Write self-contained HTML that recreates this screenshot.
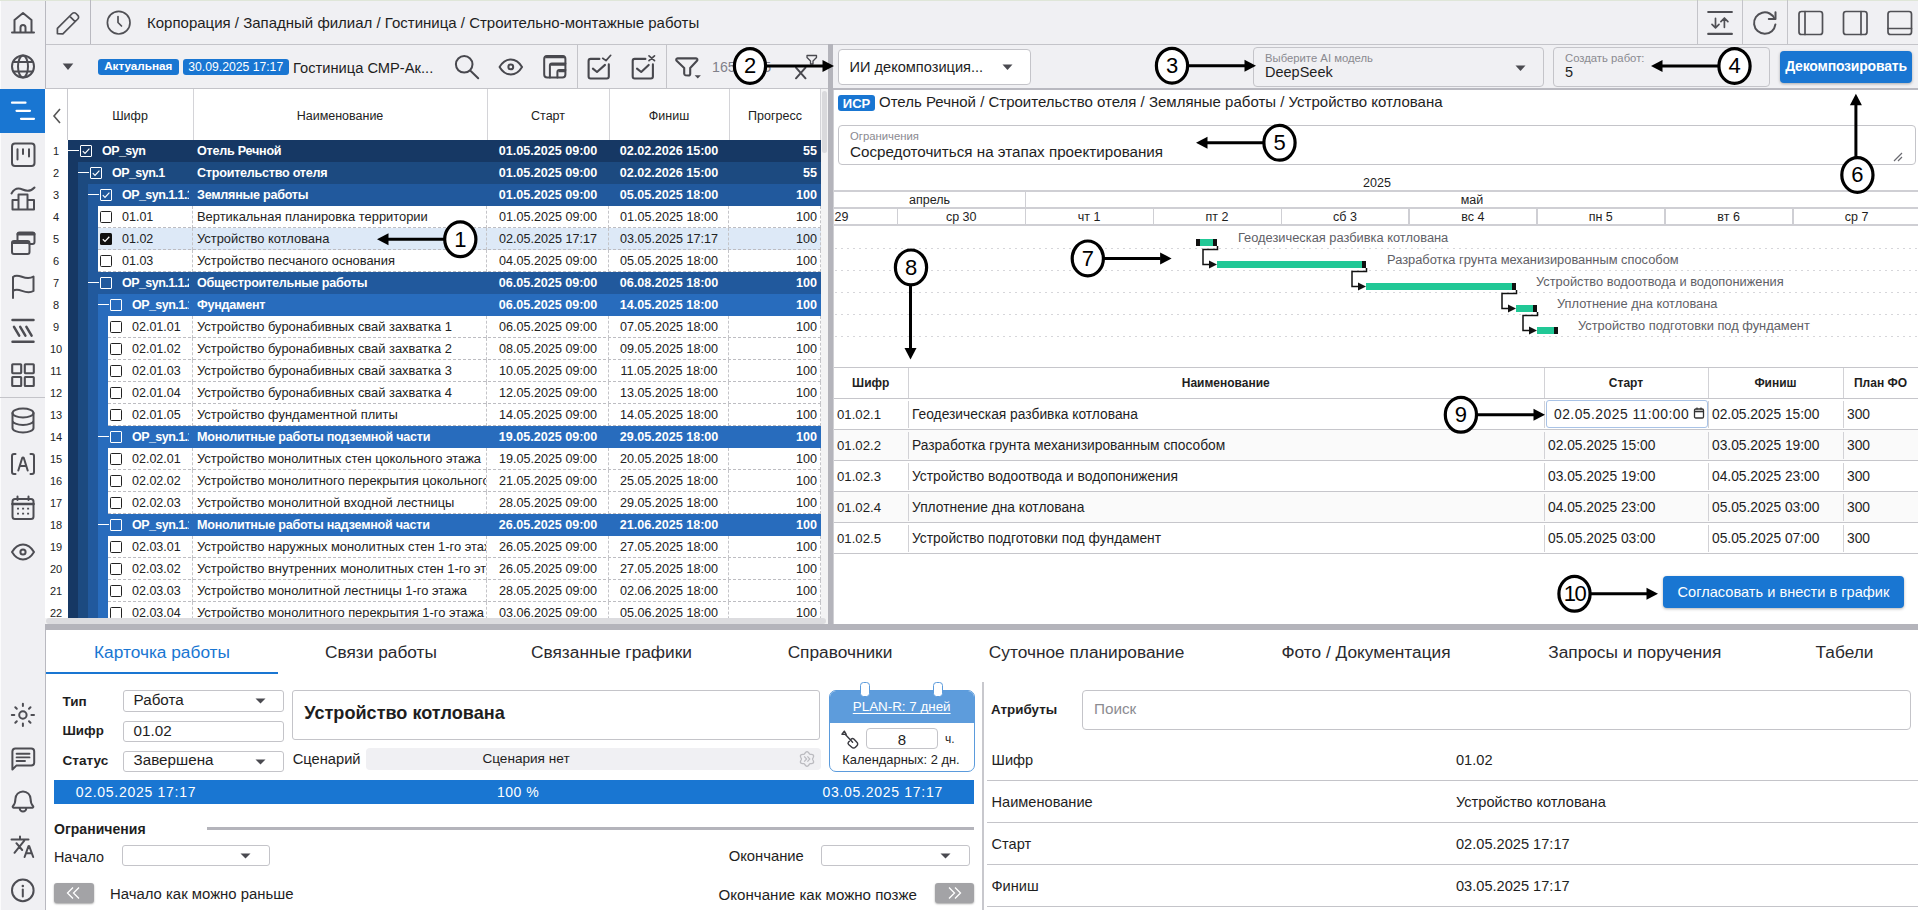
<!DOCTYPE html>
<html><head><meta charset="utf-8">
<style>
*{box-sizing:border-box;margin:0;padding:0}
html,body{width:1918px;height:910px;overflow:hidden;background:#fff}
body{position:relative;font-family:"Liberation Sans",sans-serif;color:#1e1e1e;font-size:13px}
.a{position:absolute}
.t{position:absolute;white-space:nowrap;line-height:1}
svg{position:absolute;overflow:visible}
.ic{fill:none;stroke:#4a4a50;stroke-width:1.8;stroke-linecap:round;stroke-linejoin:round}
</style></head><body>
<!-- sidebar -->
<div class="a" style="left:0;top:0;width:46px;height:910px;background:#f0f0f3;border-right:1px solid #b9b9c0"></div>
<div class="a" style="left:0;top:1px;width:1px;height:909px;background:#fbfbfc"></div>
<div class="a" style="left:0;top:89px;width:45px;height:44px;background:#1976d2"></div>
<div class="a" style="left:0;top:397px;width:45px;height:1px;background:#c4c4c9"></div>
<!-- top bar -->
<div class="a" style="left:46px;top:0;width:1872px;height:45px;background:#f0f0f3;border-bottom:1px solid #c4c4c9"></div>
<div class="a" style="left:0;top:0;width:1918px;height:1px;background:#dfe6d8"></div>
<div class="a" style="left:90px;top:0;width:1px;height:44px;background:#b9b9c0"></div>
<div class="a" style="left:1697px;top:0;width:1px;height:44px;background:#c4c4c9"></div>
<div class="a" style="left:1742px;top:0;width:1px;height:44px;background:#c4c4c9"></div>
<div class="a" style="left:1787px;top:0;width:1px;height:44px;background:#c4c4c9"></div>
<div class="t" style="left:147px;top:15px;font-size:15px;color:#1e1e1e">Корпорация / Западный филиал / Гостиница / Строительно-монтажные работы</div>
<!-- left toolbar -->
<div class="a" style="left:46px;top:45px;width:782px;height:44px;background:#f0f0f3;border-bottom:1px solid #c4c4c9"></div>
<div class="a" style="left:577px;top:44px;width:1px;height:44px;background:#c4c4c9"></div>
<div class="a" style="left:666px;top:44px;width:1px;height:44px;background:#c4c4c9"></div>
<!-- right toolbar -->
<div class="a" style="left:833px;top:45px;width:1085px;height:45px;background:#f0f0f3;border-bottom:2px solid #b9b9c0"></div>
<!-- splitters -->
<div class="a" style="left:828px;top:44px;width:5px;height:586px;background:#b4b4bb"></div>
<div class="a" style="left:45px;top:624px;width:1873px;height:6px;background:#b4b4bb"></div>
<!-- right panel left border -->
<div class="a" style="left:833px;top:90px;width:1px;height:534px;background:#d0d0d4"></div>
<!-- bottom panel left border -->

<div class="a" style="left:45px;top:89px;width:783px;height:535px;background:#fff"></div>
<div class="a" style="left:67px;top:89px;width:1px;height:51px;background:#c9c9ce"></div>
<div class="a" style="left:193px;top:89px;width:1px;height:51px;background:#d4d4d8"></div>
<div class="a" style="left:487px;top:89px;width:1px;height:51px;background:#d4d4d8"></div>
<div class="a" style="left:609px;top:89px;width:1px;height:51px;background:#d4d4d8"></div>
<div class="a" style="left:729px;top:89px;width:1px;height:51px;background:#d4d4d8"></div>
<div class="a" style="left:820px;top:89px;width:1px;height:51px;background:#d4d4d8"></div>
<div class="t" style="left:67px;width:126px;top:109.5px;text-align:center;font-size:12.5px;color:#222">Шифр</div>
<div class="t" style="left:193px;width:294px;top:109.5px;text-align:center;font-size:12.5px;color:#222">Наименование</div>
<div class="t" style="left:487px;width:122px;top:109.5px;text-align:center;font-size:12.5px;color:#222">Старт</div>
<div class="t" style="left:609px;width:120px;top:109.5px;text-align:center;font-size:12.5px;color:#222">Финиш</div>
<div class="t" style="left:729px;width:92px;top:109.5px;text-align:center;font-size:12.5px;color:#222">Прогресс</div>
<svg style="left:51px;top:107px" width="12" height="18"><path d="M9 2 L3 9 L9 16" fill="none" stroke="#555" stroke-width="1.6"/></svg>
<div class="a" style="left:45px;top:140px;width:775.5px;height:478px;overflow:hidden">
<div class="t" style="left:0;width:22px;top:6px;text-align:center;font-size:11px;color:#222">1</div>
<div class="a" style="left:23px;top:0px;width:753px;height:22px;background:#163864"></div>
<div class="a" style="left:23px;top:9.8px;width:10.5px;height:1.6px;background:#fff"></div>
<div class="a" style="left:35px;top:5px;width:12px;height:12px;border:1.3px solid #fff;border-radius:1px"></div>
<svg style="left:35px;top:5px" width="12" height="12"><path d="M2.8 6.2 L5 8.4 L9.4 3.6" fill="none" stroke="#fff" stroke-width="1.2"/></svg>
<div class="a" style="left:57px;top:0px;width:87px;height:22px;overflow:hidden"><div class="t" style="left:0;top:5px;font-size:12.5px;font-weight:bold;color:#fff;letter-spacing:-0.55px">OP_syn</div></div>
<div class="t" style="left:152px;top:5px;font-size:12.6px;font-weight:bold;color:#fff;letter-spacing:-0.25px">Отель Речной</div>
<div class="t" style="left:442px;width:122px;top:5px;text-align:center;font-size:12.6px;font-weight:bold;color:#fff">01.05.2025 09:00</div>
<div class="t" style="left:564px;width:120px;top:5px;text-align:center;font-size:12.6px;font-weight:bold;color:#fff">02.02.2026 15:00</div>
<div class="t" style="left:684px;width:88px;top:5px;text-align:right;font-size:12.6px;font-weight:bold;color:#fff">55</div>
<div class="t" style="left:0;width:22px;top:28px;text-align:center;font-size:11px;color:#222">2</div>
<div class="a" style="left:23px;top:22px;width:10px;height:22px;background:#163864"></div>
<div class="a" style="left:33px;top:22px;width:743px;height:22px;background:#1c4a80"></div>
<div class="a" style="left:33px;top:31.8px;width:10.5px;height:1.6px;background:#fff"></div>
<div class="a" style="left:45px;top:27px;width:12px;height:12px;border:1.3px solid #fff;border-radius:1px"></div>
<svg style="left:45px;top:27px" width="12" height="12"><path d="M2.8 6.2 L5 8.4 L9.4 3.6" fill="none" stroke="#fff" stroke-width="1.2"/></svg>
<div class="a" style="left:67px;top:22px;width:77px;height:22px;overflow:hidden"><div class="t" style="left:0;top:5px;font-size:12.5px;font-weight:bold;color:#fff;letter-spacing:-0.55px">OP_syn.1</div></div>
<div class="t" style="left:152px;top:27px;font-size:12.6px;font-weight:bold;color:#fff;letter-spacing:-0.25px">Строительство отеля</div>
<div class="t" style="left:442px;width:122px;top:27px;text-align:center;font-size:12.6px;font-weight:bold;color:#fff">01.05.2025 09:00</div>
<div class="t" style="left:564px;width:120px;top:27px;text-align:center;font-size:12.6px;font-weight:bold;color:#fff">02.02.2026 15:00</div>
<div class="t" style="left:684px;width:88px;top:27px;text-align:right;font-size:12.6px;font-weight:bold;color:#fff">55</div>
<div class="t" style="left:0;width:22px;top:50px;text-align:center;font-size:11px;color:#222">3</div>
<div class="a" style="left:23px;top:44px;width:10px;height:22px;background:#163864"></div>
<div class="a" style="left:33px;top:44px;width:10px;height:22px;background:#1c4a80"></div>
<div class="a" style="left:43px;top:44px;width:733px;height:22px;background:#21599d"></div>
<div class="a" style="left:43px;top:53.8px;width:10.5px;height:1.6px;background:#fff"></div>
<div class="a" style="left:55px;top:49px;width:12px;height:12px;border:1.3px solid #fff;border-radius:1px"></div>
<svg style="left:55px;top:49px" width="12" height="12"><path d="M2.8 6.2 L5 8.4 L9.4 3.6" fill="none" stroke="#fff" stroke-width="1.2"/></svg>
<div class="a" style="left:77px;top:44px;width:67px;height:22px;overflow:hidden"><div class="t" style="left:0;top:5px;font-size:12.5px;font-weight:bold;color:#fff;letter-spacing:-0.55px">OP_syn.1.1.1</div></div>
<div class="t" style="left:152px;top:49px;font-size:12.6px;font-weight:bold;color:#fff;letter-spacing:-0.25px">Земляные работы</div>
<div class="t" style="left:442px;width:122px;top:49px;text-align:center;font-size:12.6px;font-weight:bold;color:#fff">01.05.2025 09:00</div>
<div class="t" style="left:564px;width:120px;top:49px;text-align:center;font-size:12.6px;font-weight:bold;color:#fff">05.05.2025 18:00</div>
<div class="t" style="left:684px;width:88px;top:49px;text-align:right;font-size:12.6px;font-weight:bold;color:#fff">100</div>
<div class="t" style="left:0;width:22px;top:72px;text-align:center;font-size:11px;color:#222">4</div>
<div class="a" style="left:23px;top:66px;width:10px;height:22px;background:#163864"></div>
<div class="a" style="left:33px;top:66px;width:10px;height:22px;background:#1c4a80"></div>
<div class="a" style="left:43px;top:66px;width:10px;height:22px;background:#21599d"></div>
<div class="a" style="left:53px;top:66px;width:723px;height:22px;background:#fff;border-bottom:1px dashed #bdbdc2"></div>
<div class="a" style="left:147px;top:66px;width:0;height:22px;border-left:1px dashed #c4c4c8"></div>
<div class="a" style="left:441px;top:66px;width:0;height:22px;border-left:1px dashed #c4c4c8"></div>
<div class="a" style="left:563px;top:66px;width:0;height:22px;border-left:1px dashed #c4c4c8"></div>
<div class="a" style="left:683px;top:66px;width:0;height:22px;border-left:1px dashed #c4c4c8"></div>
<div class="a" style="left:775px;top:66px;width:0;height:22px;border-left:1px dashed #c4c4c8"></div>
<div class="a" style="left:55px;top:71px;width:12px;height:12px;border:1.3px solid #222;border-radius:1.5px;background:#fff"></div>
<div class="a" style="left:77px;top:66px;width:70px;height:22px;overflow:hidden"><div class="t" style="left:0;top:5px;font-size:12.5px;color:#222">01.01</div></div>
<div class="a" style="left:148px;top:66px;width:293px;height:22px;overflow:hidden"><div class="t" style="left:4px;top:5px;font-size:12.9px;color:#222">Вертикальная планировка территории</div></div>
<div class="t" style="left:442px;width:122px;top:71px;text-align:center;font-size:12.6px;color:#222">01.05.2025 09:00</div>
<div class="t" style="left:564px;width:120px;top:71px;text-align:center;font-size:12.6px;color:#222">01.05.2025 18:00</div>
<div class="t" style="left:684px;width:88px;top:71px;text-align:right;font-size:12.6px;color:#222">100</div>
<div class="t" style="left:0;width:22px;top:94px;text-align:center;font-size:11px;color:#222">5</div>
<div class="a" style="left:23px;top:88px;width:10px;height:22px;background:#163864"></div>
<div class="a" style="left:33px;top:88px;width:10px;height:22px;background:#1c4a80"></div>
<div class="a" style="left:43px;top:88px;width:10px;height:22px;background:#21599d"></div>
<div class="a" style="left:53px;top:88px;width:723px;height:22px;background:#dde9f7;border-bottom:1px dashed #bdbdc2"></div>
<div class="a" style="left:147px;top:88px;width:0;height:22px;border-left:1px dashed #c4c4c8"></div>
<div class="a" style="left:441px;top:88px;width:0;height:22px;border-left:1px dashed #c4c4c8"></div>
<div class="a" style="left:563px;top:88px;width:0;height:22px;border-left:1px dashed #c4c4c8"></div>
<div class="a" style="left:683px;top:88px;width:0;height:22px;border-left:1px dashed #c4c4c8"></div>
<div class="a" style="left:775px;top:88px;width:0;height:22px;border-left:1px dashed #c4c4c8"></div>
<div class="a" style="left:55px;top:93px;width:12px;height:12px;background:#111;border-radius:1.5px"></div>
<svg style="left:55px;top:93px" width="12" height="12"><path d="M2.8 6.3 L5 8.4 L9.3 3.8" fill="none" stroke="#fff" stroke-width="1.25"/></svg>
<div class="a" style="left:77px;top:88px;width:70px;height:22px;overflow:hidden"><div class="t" style="left:0;top:5px;font-size:12.5px;color:#222">01.02</div></div>
<div class="a" style="left:148px;top:88px;width:293px;height:22px;overflow:hidden"><div class="t" style="left:4px;top:5px;font-size:12.9px;color:#222">Устройство котлована</div></div>
<div class="t" style="left:442px;width:122px;top:93px;text-align:center;font-size:12.6px;color:#222">02.05.2025 17:17</div>
<div class="t" style="left:564px;width:120px;top:93px;text-align:center;font-size:12.6px;color:#222">03.05.2025 17:17</div>
<div class="t" style="left:684px;width:88px;top:93px;text-align:right;font-size:12.6px;color:#222">100</div>
<div class="t" style="left:0;width:22px;top:116px;text-align:center;font-size:11px;color:#222">6</div>
<div class="a" style="left:23px;top:110px;width:10px;height:22px;background:#163864"></div>
<div class="a" style="left:33px;top:110px;width:10px;height:22px;background:#1c4a80"></div>
<div class="a" style="left:43px;top:110px;width:10px;height:22px;background:#21599d"></div>
<div class="a" style="left:53px;top:110px;width:723px;height:22px;background:#fff;border-bottom:1px dashed #bdbdc2"></div>
<div class="a" style="left:147px;top:110px;width:0;height:22px;border-left:1px dashed #c4c4c8"></div>
<div class="a" style="left:441px;top:110px;width:0;height:22px;border-left:1px dashed #c4c4c8"></div>
<div class="a" style="left:563px;top:110px;width:0;height:22px;border-left:1px dashed #c4c4c8"></div>
<div class="a" style="left:683px;top:110px;width:0;height:22px;border-left:1px dashed #c4c4c8"></div>
<div class="a" style="left:775px;top:110px;width:0;height:22px;border-left:1px dashed #c4c4c8"></div>
<div class="a" style="left:55px;top:115px;width:12px;height:12px;border:1.3px solid #222;border-radius:1.5px;background:#fff"></div>
<div class="a" style="left:77px;top:110px;width:70px;height:22px;overflow:hidden"><div class="t" style="left:0;top:5px;font-size:12.5px;color:#222">01.03</div></div>
<div class="a" style="left:148px;top:110px;width:293px;height:22px;overflow:hidden"><div class="t" style="left:4px;top:5px;font-size:12.9px;color:#222">Устройство песчаного основания</div></div>
<div class="t" style="left:442px;width:122px;top:115px;text-align:center;font-size:12.6px;color:#222">04.05.2025 09:00</div>
<div class="t" style="left:564px;width:120px;top:115px;text-align:center;font-size:12.6px;color:#222">05.05.2025 18:00</div>
<div class="t" style="left:684px;width:88px;top:115px;text-align:right;font-size:12.6px;color:#222">100</div>
<div class="t" style="left:0;width:22px;top:138px;text-align:center;font-size:11px;color:#222">7</div>
<div class="a" style="left:23px;top:132px;width:10px;height:22px;background:#163864"></div>
<div class="a" style="left:33px;top:132px;width:10px;height:22px;background:#1c4a80"></div>
<div class="a" style="left:43px;top:132px;width:733px;height:22px;background:#21599d"></div>
<div class="a" style="left:43px;top:141.8px;width:10.5px;height:1.6px;background:#fff"></div>
<div class="a" style="left:55px;top:137px;width:12px;height:12px;border:1.3px solid #fff;border-radius:1px"></div>
<div class="a" style="left:77px;top:132px;width:67px;height:22px;overflow:hidden"><div class="t" style="left:0;top:5px;font-size:12.5px;font-weight:bold;color:#fff;letter-spacing:-0.55px">OP_syn.1.1.2</div></div>
<div class="t" style="left:152px;top:137px;font-size:12.6px;font-weight:bold;color:#fff;letter-spacing:-0.25px">Общестроительные работы</div>
<div class="t" style="left:442px;width:122px;top:137px;text-align:center;font-size:12.6px;font-weight:bold;color:#fff">06.05.2025 09:00</div>
<div class="t" style="left:564px;width:120px;top:137px;text-align:center;font-size:12.6px;font-weight:bold;color:#fff">06.08.2025 18:00</div>
<div class="t" style="left:684px;width:88px;top:137px;text-align:right;font-size:12.6px;font-weight:bold;color:#fff">100</div>
<div class="t" style="left:0;width:22px;top:160px;text-align:center;font-size:11px;color:#222">8</div>
<div class="a" style="left:23px;top:154px;width:10px;height:22px;background:#163864"></div>
<div class="a" style="left:33px;top:154px;width:10px;height:22px;background:#1c4a80"></div>
<div class="a" style="left:43px;top:154px;width:10px;height:22px;background:#21599d"></div>
<div class="a" style="left:53px;top:154px;width:723px;height:22px;background:#286cbd"></div>
<div class="a" style="left:53px;top:163.8px;width:10.5px;height:1.6px;background:#fff"></div>
<div class="a" style="left:65px;top:159px;width:12px;height:12px;border:1.3px solid #fff;border-radius:1px"></div>
<div class="a" style="left:87px;top:154px;width:57px;height:22px;overflow:hidden"><div class="t" style="left:0;top:5px;font-size:12.5px;font-weight:bold;color:#fff;letter-spacing:-0.55px">OP_syn.1.1.2.1</div></div>
<div class="t" style="left:152px;top:159px;font-size:12.6px;font-weight:bold;color:#fff;letter-spacing:-0.25px">Фундамент</div>
<div class="t" style="left:442px;width:122px;top:159px;text-align:center;font-size:12.6px;font-weight:bold;color:#fff">06.05.2025 09:00</div>
<div class="t" style="left:564px;width:120px;top:159px;text-align:center;font-size:12.6px;font-weight:bold;color:#fff">14.05.2025 18:00</div>
<div class="t" style="left:684px;width:88px;top:159px;text-align:right;font-size:12.6px;font-weight:bold;color:#fff">100</div>
<div class="t" style="left:0;width:22px;top:182px;text-align:center;font-size:11px;color:#222">9</div>
<div class="a" style="left:23px;top:176px;width:10px;height:22px;background:#163864"></div>
<div class="a" style="left:33px;top:176px;width:10px;height:22px;background:#1c4a80"></div>
<div class="a" style="left:43px;top:176px;width:10px;height:22px;background:#21599d"></div>
<div class="a" style="left:53px;top:176px;width:10px;height:22px;background:#286cbd"></div>
<div class="a" style="left:63px;top:176px;width:713px;height:22px;background:#fff;border-bottom:1px dashed #bdbdc2"></div>
<div class="a" style="left:147px;top:176px;width:0;height:22px;border-left:1px dashed #c4c4c8"></div>
<div class="a" style="left:441px;top:176px;width:0;height:22px;border-left:1px dashed #c4c4c8"></div>
<div class="a" style="left:563px;top:176px;width:0;height:22px;border-left:1px dashed #c4c4c8"></div>
<div class="a" style="left:683px;top:176px;width:0;height:22px;border-left:1px dashed #c4c4c8"></div>
<div class="a" style="left:775px;top:176px;width:0;height:22px;border-left:1px dashed #c4c4c8"></div>
<div class="a" style="left:65px;top:181px;width:12px;height:12px;border:1.3px solid #222;border-radius:1.5px;background:#fff"></div>
<div class="a" style="left:87px;top:176px;width:60px;height:22px;overflow:hidden"><div class="t" style="left:0;top:5px;font-size:12.5px;color:#222">02.01.01</div></div>
<div class="a" style="left:148px;top:176px;width:293px;height:22px;overflow:hidden"><div class="t" style="left:4px;top:5px;font-size:12.9px;color:#222">Устройство буронабивных свай захватка 1</div></div>
<div class="t" style="left:442px;width:122px;top:181px;text-align:center;font-size:12.6px;color:#222">06.05.2025 09:00</div>
<div class="t" style="left:564px;width:120px;top:181px;text-align:center;font-size:12.6px;color:#222">07.05.2025 18:00</div>
<div class="t" style="left:684px;width:88px;top:181px;text-align:right;font-size:12.6px;color:#222">100</div>
<div class="t" style="left:0;width:22px;top:204px;text-align:center;font-size:11px;color:#222">10</div>
<div class="a" style="left:23px;top:198px;width:10px;height:22px;background:#163864"></div>
<div class="a" style="left:33px;top:198px;width:10px;height:22px;background:#1c4a80"></div>
<div class="a" style="left:43px;top:198px;width:10px;height:22px;background:#21599d"></div>
<div class="a" style="left:53px;top:198px;width:10px;height:22px;background:#286cbd"></div>
<div class="a" style="left:63px;top:198px;width:713px;height:22px;background:#fff;border-bottom:1px dashed #bdbdc2"></div>
<div class="a" style="left:147px;top:198px;width:0;height:22px;border-left:1px dashed #c4c4c8"></div>
<div class="a" style="left:441px;top:198px;width:0;height:22px;border-left:1px dashed #c4c4c8"></div>
<div class="a" style="left:563px;top:198px;width:0;height:22px;border-left:1px dashed #c4c4c8"></div>
<div class="a" style="left:683px;top:198px;width:0;height:22px;border-left:1px dashed #c4c4c8"></div>
<div class="a" style="left:775px;top:198px;width:0;height:22px;border-left:1px dashed #c4c4c8"></div>
<div class="a" style="left:65px;top:203px;width:12px;height:12px;border:1.3px solid #222;border-radius:1.5px;background:#fff"></div>
<div class="a" style="left:87px;top:198px;width:60px;height:22px;overflow:hidden"><div class="t" style="left:0;top:5px;font-size:12.5px;color:#222">02.01.02</div></div>
<div class="a" style="left:148px;top:198px;width:293px;height:22px;overflow:hidden"><div class="t" style="left:4px;top:5px;font-size:12.9px;color:#222">Устройство буронабивных свай захватка 2</div></div>
<div class="t" style="left:442px;width:122px;top:203px;text-align:center;font-size:12.6px;color:#222">08.05.2025 09:00</div>
<div class="t" style="left:564px;width:120px;top:203px;text-align:center;font-size:12.6px;color:#222">09.05.2025 18:00</div>
<div class="t" style="left:684px;width:88px;top:203px;text-align:right;font-size:12.6px;color:#222">100</div>
<div class="t" style="left:0;width:22px;top:226px;text-align:center;font-size:11px;color:#222">11</div>
<div class="a" style="left:23px;top:220px;width:10px;height:22px;background:#163864"></div>
<div class="a" style="left:33px;top:220px;width:10px;height:22px;background:#1c4a80"></div>
<div class="a" style="left:43px;top:220px;width:10px;height:22px;background:#21599d"></div>
<div class="a" style="left:53px;top:220px;width:10px;height:22px;background:#286cbd"></div>
<div class="a" style="left:63px;top:220px;width:713px;height:22px;background:#fff;border-bottom:1px dashed #bdbdc2"></div>
<div class="a" style="left:147px;top:220px;width:0;height:22px;border-left:1px dashed #c4c4c8"></div>
<div class="a" style="left:441px;top:220px;width:0;height:22px;border-left:1px dashed #c4c4c8"></div>
<div class="a" style="left:563px;top:220px;width:0;height:22px;border-left:1px dashed #c4c4c8"></div>
<div class="a" style="left:683px;top:220px;width:0;height:22px;border-left:1px dashed #c4c4c8"></div>
<div class="a" style="left:775px;top:220px;width:0;height:22px;border-left:1px dashed #c4c4c8"></div>
<div class="a" style="left:65px;top:225px;width:12px;height:12px;border:1.3px solid #222;border-radius:1.5px;background:#fff"></div>
<div class="a" style="left:87px;top:220px;width:60px;height:22px;overflow:hidden"><div class="t" style="left:0;top:5px;font-size:12.5px;color:#222">02.01.03</div></div>
<div class="a" style="left:148px;top:220px;width:293px;height:22px;overflow:hidden"><div class="t" style="left:4px;top:5px;font-size:12.9px;color:#222">Устройство буронабивных свай захватка 3</div></div>
<div class="t" style="left:442px;width:122px;top:225px;text-align:center;font-size:12.6px;color:#222">10.05.2025 09:00</div>
<div class="t" style="left:564px;width:120px;top:225px;text-align:center;font-size:12.6px;color:#222">11.05.2025 18:00</div>
<div class="t" style="left:684px;width:88px;top:225px;text-align:right;font-size:12.6px;color:#222">100</div>
<div class="t" style="left:0;width:22px;top:248px;text-align:center;font-size:11px;color:#222">12</div>
<div class="a" style="left:23px;top:242px;width:10px;height:22px;background:#163864"></div>
<div class="a" style="left:33px;top:242px;width:10px;height:22px;background:#1c4a80"></div>
<div class="a" style="left:43px;top:242px;width:10px;height:22px;background:#21599d"></div>
<div class="a" style="left:53px;top:242px;width:10px;height:22px;background:#286cbd"></div>
<div class="a" style="left:63px;top:242px;width:713px;height:22px;background:#fff;border-bottom:1px dashed #bdbdc2"></div>
<div class="a" style="left:147px;top:242px;width:0;height:22px;border-left:1px dashed #c4c4c8"></div>
<div class="a" style="left:441px;top:242px;width:0;height:22px;border-left:1px dashed #c4c4c8"></div>
<div class="a" style="left:563px;top:242px;width:0;height:22px;border-left:1px dashed #c4c4c8"></div>
<div class="a" style="left:683px;top:242px;width:0;height:22px;border-left:1px dashed #c4c4c8"></div>
<div class="a" style="left:775px;top:242px;width:0;height:22px;border-left:1px dashed #c4c4c8"></div>
<div class="a" style="left:65px;top:247px;width:12px;height:12px;border:1.3px solid #222;border-radius:1.5px;background:#fff"></div>
<div class="a" style="left:87px;top:242px;width:60px;height:22px;overflow:hidden"><div class="t" style="left:0;top:5px;font-size:12.5px;color:#222">02.01.04</div></div>
<div class="a" style="left:148px;top:242px;width:293px;height:22px;overflow:hidden"><div class="t" style="left:4px;top:5px;font-size:12.9px;color:#222">Устройство буронабивных свай захватка 4</div></div>
<div class="t" style="left:442px;width:122px;top:247px;text-align:center;font-size:12.6px;color:#222">12.05.2025 09:00</div>
<div class="t" style="left:564px;width:120px;top:247px;text-align:center;font-size:12.6px;color:#222">13.05.2025 18:00</div>
<div class="t" style="left:684px;width:88px;top:247px;text-align:right;font-size:12.6px;color:#222">100</div>
<div class="t" style="left:0;width:22px;top:270px;text-align:center;font-size:11px;color:#222">13</div>
<div class="a" style="left:23px;top:264px;width:10px;height:22px;background:#163864"></div>
<div class="a" style="left:33px;top:264px;width:10px;height:22px;background:#1c4a80"></div>
<div class="a" style="left:43px;top:264px;width:10px;height:22px;background:#21599d"></div>
<div class="a" style="left:53px;top:264px;width:10px;height:22px;background:#286cbd"></div>
<div class="a" style="left:63px;top:264px;width:713px;height:22px;background:#fff;border-bottom:1px dashed #bdbdc2"></div>
<div class="a" style="left:147px;top:264px;width:0;height:22px;border-left:1px dashed #c4c4c8"></div>
<div class="a" style="left:441px;top:264px;width:0;height:22px;border-left:1px dashed #c4c4c8"></div>
<div class="a" style="left:563px;top:264px;width:0;height:22px;border-left:1px dashed #c4c4c8"></div>
<div class="a" style="left:683px;top:264px;width:0;height:22px;border-left:1px dashed #c4c4c8"></div>
<div class="a" style="left:775px;top:264px;width:0;height:22px;border-left:1px dashed #c4c4c8"></div>
<div class="a" style="left:65px;top:269px;width:12px;height:12px;border:1.3px solid #222;border-radius:1.5px;background:#fff"></div>
<div class="a" style="left:87px;top:264px;width:60px;height:22px;overflow:hidden"><div class="t" style="left:0;top:5px;font-size:12.5px;color:#222">02.01.05</div></div>
<div class="a" style="left:148px;top:264px;width:293px;height:22px;overflow:hidden"><div class="t" style="left:4px;top:5px;font-size:12.9px;color:#222">Устройство фундаментной плиты</div></div>
<div class="t" style="left:442px;width:122px;top:269px;text-align:center;font-size:12.6px;color:#222">14.05.2025 09:00</div>
<div class="t" style="left:564px;width:120px;top:269px;text-align:center;font-size:12.6px;color:#222">14.05.2025 18:00</div>
<div class="t" style="left:684px;width:88px;top:269px;text-align:right;font-size:12.6px;color:#222">100</div>
<div class="t" style="left:0;width:22px;top:292px;text-align:center;font-size:11px;color:#222">14</div>
<div class="a" style="left:23px;top:286px;width:10px;height:22px;background:#163864"></div>
<div class="a" style="left:33px;top:286px;width:10px;height:22px;background:#1c4a80"></div>
<div class="a" style="left:43px;top:286px;width:10px;height:22px;background:#21599d"></div>
<div class="a" style="left:53px;top:286px;width:723px;height:22px;background:#286cbd"></div>
<div class="a" style="left:53px;top:295.8px;width:10.5px;height:1.6px;background:#fff"></div>
<div class="a" style="left:65px;top:291px;width:12px;height:12px;border:1.3px solid #fff;border-radius:1px"></div>
<div class="a" style="left:87px;top:286px;width:57px;height:22px;overflow:hidden"><div class="t" style="left:0;top:5px;font-size:12.5px;font-weight:bold;color:#fff;letter-spacing:-0.55px">OP_syn.1.1.2.2</div></div>
<div class="t" style="left:152px;top:291px;font-size:12.6px;font-weight:bold;color:#fff;letter-spacing:-0.25px">Монолитные работы подземной части</div>
<div class="t" style="left:442px;width:122px;top:291px;text-align:center;font-size:12.6px;font-weight:bold;color:#fff">19.05.2025 09:00</div>
<div class="t" style="left:564px;width:120px;top:291px;text-align:center;font-size:12.6px;font-weight:bold;color:#fff">29.05.2025 18:00</div>
<div class="t" style="left:684px;width:88px;top:291px;text-align:right;font-size:12.6px;font-weight:bold;color:#fff">100</div>
<div class="t" style="left:0;width:22px;top:314px;text-align:center;font-size:11px;color:#222">15</div>
<div class="a" style="left:23px;top:308px;width:10px;height:22px;background:#163864"></div>
<div class="a" style="left:33px;top:308px;width:10px;height:22px;background:#1c4a80"></div>
<div class="a" style="left:43px;top:308px;width:10px;height:22px;background:#21599d"></div>
<div class="a" style="left:53px;top:308px;width:10px;height:22px;background:#286cbd"></div>
<div class="a" style="left:63px;top:308px;width:713px;height:22px;background:#fff;border-bottom:1px dashed #bdbdc2"></div>
<div class="a" style="left:147px;top:308px;width:0;height:22px;border-left:1px dashed #c4c4c8"></div>
<div class="a" style="left:441px;top:308px;width:0;height:22px;border-left:1px dashed #c4c4c8"></div>
<div class="a" style="left:563px;top:308px;width:0;height:22px;border-left:1px dashed #c4c4c8"></div>
<div class="a" style="left:683px;top:308px;width:0;height:22px;border-left:1px dashed #c4c4c8"></div>
<div class="a" style="left:775px;top:308px;width:0;height:22px;border-left:1px dashed #c4c4c8"></div>
<div class="a" style="left:65px;top:313px;width:12px;height:12px;border:1.3px solid #222;border-radius:1.5px;background:#fff"></div>
<div class="a" style="left:87px;top:308px;width:60px;height:22px;overflow:hidden"><div class="t" style="left:0;top:5px;font-size:12.5px;color:#222">02.02.01</div></div>
<div class="a" style="left:148px;top:308px;width:293px;height:22px;overflow:hidden"><div class="t" style="left:4px;top:5px;font-size:12.9px;color:#222">Устройство монолитных стен цокольного этажа</div></div>
<div class="t" style="left:442px;width:122px;top:313px;text-align:center;font-size:12.6px;color:#222">19.05.2025 09:00</div>
<div class="t" style="left:564px;width:120px;top:313px;text-align:center;font-size:12.6px;color:#222">20.05.2025 18:00</div>
<div class="t" style="left:684px;width:88px;top:313px;text-align:right;font-size:12.6px;color:#222">100</div>
<div class="t" style="left:0;width:22px;top:336px;text-align:center;font-size:11px;color:#222">16</div>
<div class="a" style="left:23px;top:330px;width:10px;height:22px;background:#163864"></div>
<div class="a" style="left:33px;top:330px;width:10px;height:22px;background:#1c4a80"></div>
<div class="a" style="left:43px;top:330px;width:10px;height:22px;background:#21599d"></div>
<div class="a" style="left:53px;top:330px;width:10px;height:22px;background:#286cbd"></div>
<div class="a" style="left:63px;top:330px;width:713px;height:22px;background:#fff;border-bottom:1px dashed #bdbdc2"></div>
<div class="a" style="left:147px;top:330px;width:0;height:22px;border-left:1px dashed #c4c4c8"></div>
<div class="a" style="left:441px;top:330px;width:0;height:22px;border-left:1px dashed #c4c4c8"></div>
<div class="a" style="left:563px;top:330px;width:0;height:22px;border-left:1px dashed #c4c4c8"></div>
<div class="a" style="left:683px;top:330px;width:0;height:22px;border-left:1px dashed #c4c4c8"></div>
<div class="a" style="left:775px;top:330px;width:0;height:22px;border-left:1px dashed #c4c4c8"></div>
<div class="a" style="left:65px;top:335px;width:12px;height:12px;border:1.3px solid #222;border-radius:1.5px;background:#fff"></div>
<div class="a" style="left:87px;top:330px;width:60px;height:22px;overflow:hidden"><div class="t" style="left:0;top:5px;font-size:12.5px;color:#222">02.02.02</div></div>
<div class="a" style="left:148px;top:330px;width:293px;height:22px;overflow:hidden"><div class="t" style="left:4px;top:5px;font-size:12.9px;color:#222">Устройство монолитного перекрытия цокольного этажа</div></div>
<div class="t" style="left:442px;width:122px;top:335px;text-align:center;font-size:12.6px;color:#222">21.05.2025 09:00</div>
<div class="t" style="left:564px;width:120px;top:335px;text-align:center;font-size:12.6px;color:#222">25.05.2025 18:00</div>
<div class="t" style="left:684px;width:88px;top:335px;text-align:right;font-size:12.6px;color:#222">100</div>
<div class="t" style="left:0;width:22px;top:358px;text-align:center;font-size:11px;color:#222">17</div>
<div class="a" style="left:23px;top:352px;width:10px;height:22px;background:#163864"></div>
<div class="a" style="left:33px;top:352px;width:10px;height:22px;background:#1c4a80"></div>
<div class="a" style="left:43px;top:352px;width:10px;height:22px;background:#21599d"></div>
<div class="a" style="left:53px;top:352px;width:10px;height:22px;background:#286cbd"></div>
<div class="a" style="left:63px;top:352px;width:713px;height:22px;background:#fff;border-bottom:1px dashed #bdbdc2"></div>
<div class="a" style="left:147px;top:352px;width:0;height:22px;border-left:1px dashed #c4c4c8"></div>
<div class="a" style="left:441px;top:352px;width:0;height:22px;border-left:1px dashed #c4c4c8"></div>
<div class="a" style="left:563px;top:352px;width:0;height:22px;border-left:1px dashed #c4c4c8"></div>
<div class="a" style="left:683px;top:352px;width:0;height:22px;border-left:1px dashed #c4c4c8"></div>
<div class="a" style="left:775px;top:352px;width:0;height:22px;border-left:1px dashed #c4c4c8"></div>
<div class="a" style="left:65px;top:357px;width:12px;height:12px;border:1.3px solid #222;border-radius:1.5px;background:#fff"></div>
<div class="a" style="left:87px;top:352px;width:60px;height:22px;overflow:hidden"><div class="t" style="left:0;top:5px;font-size:12.5px;color:#222">02.02.03</div></div>
<div class="a" style="left:148px;top:352px;width:293px;height:22px;overflow:hidden"><div class="t" style="left:4px;top:5px;font-size:12.9px;color:#222">Устройство монолитной входной лестницы</div></div>
<div class="t" style="left:442px;width:122px;top:357px;text-align:center;font-size:12.6px;color:#222">28.05.2025 09:00</div>
<div class="t" style="left:564px;width:120px;top:357px;text-align:center;font-size:12.6px;color:#222">29.05.2025 18:00</div>
<div class="t" style="left:684px;width:88px;top:357px;text-align:right;font-size:12.6px;color:#222">100</div>
<div class="t" style="left:0;width:22px;top:380px;text-align:center;font-size:11px;color:#222">18</div>
<div class="a" style="left:23px;top:374px;width:10px;height:22px;background:#163864"></div>
<div class="a" style="left:33px;top:374px;width:10px;height:22px;background:#1c4a80"></div>
<div class="a" style="left:43px;top:374px;width:10px;height:22px;background:#21599d"></div>
<div class="a" style="left:53px;top:374px;width:723px;height:22px;background:#286cbd"></div>
<div class="a" style="left:53px;top:383.8px;width:10.5px;height:1.6px;background:#fff"></div>
<div class="a" style="left:65px;top:379px;width:12px;height:12px;border:1.3px solid #fff;border-radius:1px"></div>
<div class="a" style="left:87px;top:374px;width:57px;height:22px;overflow:hidden"><div class="t" style="left:0;top:5px;font-size:12.5px;font-weight:bold;color:#fff;letter-spacing:-0.55px">OP_syn.1.1.2.3</div></div>
<div class="t" style="left:152px;top:379px;font-size:12.6px;font-weight:bold;color:#fff;letter-spacing:-0.25px">Монолитные работы надземной части</div>
<div class="t" style="left:442px;width:122px;top:379px;text-align:center;font-size:12.6px;font-weight:bold;color:#fff">26.05.2025 09:00</div>
<div class="t" style="left:564px;width:120px;top:379px;text-align:center;font-size:12.6px;font-weight:bold;color:#fff">21.06.2025 18:00</div>
<div class="t" style="left:684px;width:88px;top:379px;text-align:right;font-size:12.6px;font-weight:bold;color:#fff">100</div>
<div class="t" style="left:0;width:22px;top:402px;text-align:center;font-size:11px;color:#222">19</div>
<div class="a" style="left:23px;top:396px;width:10px;height:22px;background:#163864"></div>
<div class="a" style="left:33px;top:396px;width:10px;height:22px;background:#1c4a80"></div>
<div class="a" style="left:43px;top:396px;width:10px;height:22px;background:#21599d"></div>
<div class="a" style="left:53px;top:396px;width:10px;height:22px;background:#286cbd"></div>
<div class="a" style="left:63px;top:396px;width:713px;height:22px;background:#fff;border-bottom:1px dashed #bdbdc2"></div>
<div class="a" style="left:147px;top:396px;width:0;height:22px;border-left:1px dashed #c4c4c8"></div>
<div class="a" style="left:441px;top:396px;width:0;height:22px;border-left:1px dashed #c4c4c8"></div>
<div class="a" style="left:563px;top:396px;width:0;height:22px;border-left:1px dashed #c4c4c8"></div>
<div class="a" style="left:683px;top:396px;width:0;height:22px;border-left:1px dashed #c4c4c8"></div>
<div class="a" style="left:775px;top:396px;width:0;height:22px;border-left:1px dashed #c4c4c8"></div>
<div class="a" style="left:65px;top:401px;width:12px;height:12px;border:1.3px solid #222;border-radius:1.5px;background:#fff"></div>
<div class="a" style="left:87px;top:396px;width:60px;height:22px;overflow:hidden"><div class="t" style="left:0;top:5px;font-size:12.5px;color:#222">02.03.01</div></div>
<div class="a" style="left:148px;top:396px;width:293px;height:22px;overflow:hidden"><div class="t" style="left:4px;top:5px;font-size:12.9px;color:#222">Устройство наружных монолитных стен 1-го этажа</div></div>
<div class="t" style="left:442px;width:122px;top:401px;text-align:center;font-size:12.6px;color:#222">26.05.2025 09:00</div>
<div class="t" style="left:564px;width:120px;top:401px;text-align:center;font-size:12.6px;color:#222">27.05.2025 18:00</div>
<div class="t" style="left:684px;width:88px;top:401px;text-align:right;font-size:12.6px;color:#222">100</div>
<div class="t" style="left:0;width:22px;top:424px;text-align:center;font-size:11px;color:#222">20</div>
<div class="a" style="left:23px;top:418px;width:10px;height:22px;background:#163864"></div>
<div class="a" style="left:33px;top:418px;width:10px;height:22px;background:#1c4a80"></div>
<div class="a" style="left:43px;top:418px;width:10px;height:22px;background:#21599d"></div>
<div class="a" style="left:53px;top:418px;width:10px;height:22px;background:#286cbd"></div>
<div class="a" style="left:63px;top:418px;width:713px;height:22px;background:#fff;border-bottom:1px dashed #bdbdc2"></div>
<div class="a" style="left:147px;top:418px;width:0;height:22px;border-left:1px dashed #c4c4c8"></div>
<div class="a" style="left:441px;top:418px;width:0;height:22px;border-left:1px dashed #c4c4c8"></div>
<div class="a" style="left:563px;top:418px;width:0;height:22px;border-left:1px dashed #c4c4c8"></div>
<div class="a" style="left:683px;top:418px;width:0;height:22px;border-left:1px dashed #c4c4c8"></div>
<div class="a" style="left:775px;top:418px;width:0;height:22px;border-left:1px dashed #c4c4c8"></div>
<div class="a" style="left:65px;top:423px;width:12px;height:12px;border:1.3px solid #222;border-radius:1.5px;background:#fff"></div>
<div class="a" style="left:87px;top:418px;width:60px;height:22px;overflow:hidden"><div class="t" style="left:0;top:5px;font-size:12.5px;color:#222">02.03.02</div></div>
<div class="a" style="left:148px;top:418px;width:293px;height:22px;overflow:hidden"><div class="t" style="left:4px;top:5px;font-size:12.9px;color:#222">Устройство внутренних монолитных стен 1-го этажа</div></div>
<div class="t" style="left:442px;width:122px;top:423px;text-align:center;font-size:12.6px;color:#222">26.05.2025 09:00</div>
<div class="t" style="left:564px;width:120px;top:423px;text-align:center;font-size:12.6px;color:#222">27.05.2025 18:00</div>
<div class="t" style="left:684px;width:88px;top:423px;text-align:right;font-size:12.6px;color:#222">100</div>
<div class="t" style="left:0;width:22px;top:446px;text-align:center;font-size:11px;color:#222">21</div>
<div class="a" style="left:23px;top:440px;width:10px;height:22px;background:#163864"></div>
<div class="a" style="left:33px;top:440px;width:10px;height:22px;background:#1c4a80"></div>
<div class="a" style="left:43px;top:440px;width:10px;height:22px;background:#21599d"></div>
<div class="a" style="left:53px;top:440px;width:10px;height:22px;background:#286cbd"></div>
<div class="a" style="left:63px;top:440px;width:713px;height:22px;background:#fff;border-bottom:1px dashed #bdbdc2"></div>
<div class="a" style="left:147px;top:440px;width:0;height:22px;border-left:1px dashed #c4c4c8"></div>
<div class="a" style="left:441px;top:440px;width:0;height:22px;border-left:1px dashed #c4c4c8"></div>
<div class="a" style="left:563px;top:440px;width:0;height:22px;border-left:1px dashed #c4c4c8"></div>
<div class="a" style="left:683px;top:440px;width:0;height:22px;border-left:1px dashed #c4c4c8"></div>
<div class="a" style="left:775px;top:440px;width:0;height:22px;border-left:1px dashed #c4c4c8"></div>
<div class="a" style="left:65px;top:445px;width:12px;height:12px;border:1.3px solid #222;border-radius:1.5px;background:#fff"></div>
<div class="a" style="left:87px;top:440px;width:60px;height:22px;overflow:hidden"><div class="t" style="left:0;top:5px;font-size:12.5px;color:#222">02.03.03</div></div>
<div class="a" style="left:148px;top:440px;width:293px;height:22px;overflow:hidden"><div class="t" style="left:4px;top:5px;font-size:12.9px;color:#222">Устройство монолитной лестницы 1-го этажа</div></div>
<div class="t" style="left:442px;width:122px;top:445px;text-align:center;font-size:12.6px;color:#222">28.05.2025 09:00</div>
<div class="t" style="left:564px;width:120px;top:445px;text-align:center;font-size:12.6px;color:#222">02.06.2025 18:00</div>
<div class="t" style="left:684px;width:88px;top:445px;text-align:right;font-size:12.6px;color:#222">100</div>
<div class="t" style="left:0;width:22px;top:468px;text-align:center;font-size:11px;color:#222">22</div>
<div class="a" style="left:23px;top:462px;width:10px;height:22px;background:#163864"></div>
<div class="a" style="left:33px;top:462px;width:10px;height:22px;background:#1c4a80"></div>
<div class="a" style="left:43px;top:462px;width:10px;height:22px;background:#21599d"></div>
<div class="a" style="left:53px;top:462px;width:10px;height:22px;background:#286cbd"></div>
<div class="a" style="left:63px;top:462px;width:713px;height:22px;background:#fff;border-bottom:1px dashed #bdbdc2"></div>
<div class="a" style="left:147px;top:462px;width:0;height:22px;border-left:1px dashed #c4c4c8"></div>
<div class="a" style="left:441px;top:462px;width:0;height:22px;border-left:1px dashed #c4c4c8"></div>
<div class="a" style="left:563px;top:462px;width:0;height:22px;border-left:1px dashed #c4c4c8"></div>
<div class="a" style="left:683px;top:462px;width:0;height:22px;border-left:1px dashed #c4c4c8"></div>
<div class="a" style="left:775px;top:462px;width:0;height:22px;border-left:1px dashed #c4c4c8"></div>
<div class="a" style="left:65px;top:467px;width:12px;height:12px;border:1.3px solid #222;border-radius:1.5px;background:#fff"></div>
<div class="a" style="left:87px;top:462px;width:60px;height:22px;overflow:hidden"><div class="t" style="left:0;top:5px;font-size:12.5px;color:#222">02.03.04</div></div>
<div class="a" style="left:148px;top:462px;width:293px;height:22px;overflow:hidden"><div class="t" style="left:4px;top:5px;font-size:12.9px;color:#222">Устройство монолитного перекрытия 1-го этажа</div></div>
<div class="t" style="left:442px;width:122px;top:467px;text-align:center;font-size:12.6px;color:#222">03.06.2025 09:00</div>
<div class="t" style="left:564px;width:120px;top:467px;text-align:center;font-size:12.6px;color:#222">05.06.2025 18:00</div>
<div class="t" style="left:684px;width:88px;top:467px;text-align:right;font-size:12.6px;color:#222">100</div>
</div>
<div class="a" style="left:821px;top:89px;width:7px;height:535px;background:#f3f3f4"></div>
<div class="a" style="left:822px;top:91px;width:5px;height:62px;background:#d9d9dc;border-radius:3px"></div>
<div class="a" style="left:45px;top:618px;width:783px;height:6px;background:#f3f3f4"></div>
<div class="a" style="left:46px;top:618px;width:780px;height:6px;background:#dcdcdf;border-radius:3px"></div>
<!-- sidebar icons -->
<svg style="left:0;top:0" width="45" height="910">
 <g class="ic" style="stroke:#4d4d53;stroke-width:2">
  <!-- home -->
  <path d="M12 32.5 H34 M14.5 32.5 V20 L23 13 L31.5 20 V32.5 M20.5 32.5 V27.5 A2.5 2.5 0 0 1 25.5 27.5 V32.5"/>
  <!-- globe -->
  <circle cx="23" cy="66.5" r="11"/><ellipse cx="23" cy="66.5" rx="5" ry="11"/><path d="M13.5 62 H32.5 M13.5 71.5 H32.5"/>
  <!-- bars2 -->
  <rect x="12" y="143.5" width="22.5" height="22.5" rx="3"/><path d="M17.5 149.2 V159.5 M23 149.2 V154 M29 149.2 V156.5"/>
  <!-- chart -->
  <path d="M12.5 209.5 V200 H18.5 V209.5 Z M18.5 209.5 V194.5 H27.5 V209.5 Z M27.5 209.5 V200 H34 V209.5 Z M11.5 193.5 C14 189 18 187.5 22.5 189.5 C27 191.5 31 191.5 34.5 187.5"/>
  <!-- windows -->
  <path d="M17.5 240 V234.5 A2 2 0 0 1 19.5 232.5 H32.5 A2 2 0 0 1 34.5 234.5 V242 A2 2 0 0 1 32.5 244 H29.5"/><rect x="12" y="241" width="17.5" height="13" rx="2"/><path d="M18 234 H34 M13 242.5 H28.5" style="stroke-width:3"/>
  <!-- flag -->
  <path d="M13 298 V277 C19 272 25 282 33.5 276.5 V291 C25 296 19 286 13 291"/>
  <!-- hatch -->
  <path d="M12.5 320 H33.5 M12.5 341.8 H33.5 M14 326.8 L19.2 335.6 M20.2 326.8 L25.4 335.6 M26.4 326.8 L31.6 335.6" style="stroke-width:2.5"/>
  <!-- grid -->
  <rect x="12.2" y="364.2" width="9" height="9" rx="0.6" style="stroke-width:2.1"/><rect x="24.8" y="364.2" width="9" height="9" rx="0.6" style="stroke-width:2.1"/><rect x="12.2" y="377" width="9" height="9" rx="0.6" style="stroke-width:2.1"/><rect x="24.8" y="377" width="9" height="9" rx="0.6" style="stroke-width:2.1"/>
  <!-- db -->
  <ellipse cx="23" cy="413" rx="10.5" ry="4.5"/><path d="M12.5 413 V428 A10.5 4.5 0 0 0 33.5 428 V413 M12.5 420.5 A10.5 4.5 0 0 0 33.5 420.5"/>
  <!-- [A] -->
  <path d="M15.5 454 H14 A2 2 0 0 0 12 456 V472 A2 2 0 0 0 14 474 H15.5 M30.5 454 H32 A2 2 0 0 1 34 456 V472 A2 2 0 0 1 32 474 H30.5 M18.3 470.5 L22.2 458 A0.9 0.9 0 0 1 23.8 458 L27.7 470.5 M19.8 466 H26.2"/>
  <!-- calendar -->
  <rect x="12.5" y="499" width="21" height="20" rx="2.5"/><path d="M12.5 504 H33.5" style="stroke-width:2.6"/><path d="M17.5 496.5 V500 M28.5 496.5 V500"/>
  <g style="stroke-width:1.8;stroke-linecap:square"><path d="M17.9 508.6 h.2 M23 508.6 h.2 M28 508.6 h.2 M17.9 513.6 h.2 M23 513.6 h.2 M28 513.6 h.2"/></g>
  <!-- eye -->
  <path d="M34 552 C31 557 27.4 559.5 23 559.5 C18.6 559.5 15 557 12 552 C15 547 18.6 544.5 23 544.5 C27.4 544.5 31 547 34 552 Z"/><circle cx="23" cy="552" r="2.6"/>
  <!-- sun -->
  <circle cx="22.9" cy="715" r="3.7"/><path d="M22.9 703.8 V705.9 M22.9 723.6 V726 M11.8 715 H14.3 M31.4 715 H34 M15.3 707.3 L16.8 708.8 M29 721.2 L30.5 722.7 M15.3 722.7 L16.8 721.2 M29 708.8 L30.5 707.3"/>
  <!-- chat -->
  <path d="M12.4 769.5 V751.5 A3 3 0 0 1 15.4 748.6 H31.2 A3 3 0 0 1 34.2 751.6 V762.6 A3 3 0 0 1 31.2 765.6 H16.3 Z"/><path d="M16.6 753.7 H29.5 M16.6 757.4 H29.5 M16.6 761 H25" style="stroke-width:1.9"/>
  <!-- bell -->
  <path d="M13.6 807.8 H32.4 A1.1 1.1 0 0 0 33 805.9 C31.3 804.3 30.6 802.3 30.6 799 A7.6 7.6 0 0 0 15.4 799 C15.4 802.3 14.7 804.3 13 805.9 A1.1 1.1 0 0 0 13.6 807.8 Z M19.7 808.3 A3.3 3.3 0 0 0 26.3 808.3"/>
  <!-- translate -->
  <path d="M11.5 839.5 H28.5 M20 836.5 V839.5 M24.3 840.6 L14.5 852.8 M16.4 843.2 L22.2 850 M24.6 857 L28.4 846.3 A0.5 0.5 0 0 1 29.3 846.3 L33.2 857 M26 853.2 H31.8"/>
  <!-- info -->
  <circle cx="22.8" cy="890.4" r="10.8"/><path d="M22.8 889.6 V896.4"/>
 </g>
 <circle cx="22.8" cy="886" r="1.25" fill="#4d4d53"/>
 <!-- active list icon -->
 <path d="M12 102.7 H25.5 M16.5 110.8 H30 M21 118.8 H34" stroke="#fff" stroke-width="2.2" stroke-linecap="round"/>
</svg>
<!-- top bar icons -->
<svg style="left:45px;top:0" width="1873" height="44">
 <g class="ic" style="stroke:#505055;stroke-width:1.7">
  <!-- pencil -->
  <path d="M12.4 33.7 V28.4 L27.3 13.5 A2.6 2.6 0 0 1 31 13.5 L32.8 15.3 A2.6 2.6 0 0 1 32.8 19 L17.9 33.9 Z M24.6 16.2 L30.1 21.7"/>
  <!-- clock -->
  <circle cx="73.7" cy="22.7" r="11.3"/><path d="M73 16.5 V22.5 L76.5 26"/>
  <!-- sort icon -->
  <path d="M1663.2 12 H1686.9 M1663.2 33.9 H1686.9" style="stroke-width:2.1"/>
  <path d="M1670.5 18.3 V27.3 M1667 24.3 L1670.5 27.8 L1674 24.3 M1679.4 27.3 V18.3 M1675.9 21.6 L1679.4 18 L1682.9 21.6"/>
  <!-- refresh -->
  <g transform="translate(1703.7,7.0) scale(1.34)" style="stroke-width:1.5"><path d="M19.933 13.041a8 8 0 1 1 -9.925 -8.788c3.899 -1 7.935 1.007 9.425 4.747"/><path d="M20 4v5h-5"/></g>
  <!-- layouts -->
  <rect x="1754" y="11.5" width="23.5" height="23" rx="2.5"/><path d="M1760 11.5 V34.5"/>
  <rect x="1798.5" y="11.5" width="23.5" height="23" rx="2.5"/><path d="M1816 11.5 V34.5"/>
  <rect x="1843" y="11.5" width="23.5" height="23" rx="2.5"/><path d="M1843 28.5 H1866.5"/>
 </g>
</svg>
<!-- left toolbar -->
<svg style="left:45px;top:44px" width="783" height="45">
 <path d="M17.7 19.5 H28.3 L23 26 Z" fill="#4a4a50"/>
 <g class="ic" style="stroke:#48484e;stroke-width:2">
  <circle cx="419.2" cy="20.3" r="8.3"/><path d="M425.7 27 L433.2 34.3"/>
  <path d="M477.05 22.9 C474.05 27.9 470.3 30.4 465.8 30.4 C461.3 30.4 457.55 27.9 454.55 22.9 C457.55 17.9 461.3 15.4 465.8 15.4 C470.3 15.4 474.05 17.9 477.05 22.9 Z"/><circle cx="465.8" cy="22.9" r="2.4"/>
  <rect x="499.2" y="12.1" width="21.2" height="21.4" rx="3"/>
  <path d="M504.9 33.5 V21.5 A2 2 0 0 1 506.9 19.5 H520.4 M512.4 33.5 V28 A2 2 0 0 1 514.4 26 H520.4"/>
  <path d="M500.5 12.9 H519.3 M506 20.4 H520 M513.5 26.9 H520" style="stroke-width:2.6;stroke-linecap:butt"/>
  <path d="M554.4 14.9 H545.6 A2 2 0 0 0 543.6 16.9 V32.5 A2 2 0 0 0 545.6 34.5 H561.8 A2 2 0 0 0 563.8 32.5 V20.4 M547.9 24.6 L552 28 L560 20.9" style="stroke-width:2.1"/>
  <path d="M557.7 14.3 L561 16.6 L565.7 11.3" style="stroke-width:1.7"/>
  <path d="M600.4 14.9 H589.7 A2 2 0 0 0 587.7 16.9 V32.5 A2 2 0 0 0 589.7 34.5 H605.9 A2 2 0 0 0 607.9 32.5 V20.4 M592 24.6 L596.2 28 L603.7 20.9" style="stroke-width:2.1"/>
  <path d="M604 11.8 L609.5 16.6 M609.5 11.8 L604 16.6" style="stroke-width:1.7"/>
  <path d="M632.6 14.4 H651 A1.4 1.4 0 0 1 652 16.8 L645.2 24 V30 A1.5 1.5 0 0 1 643.5 31.5 L640.4 31.2 A1.5 1.5 0 0 1 639.2 29.8 V24 L631.6 16.8 A1.4 1.4 0 0 1 632.6 14.4 Z" style="stroke-width:2.1"/>
  <path d="M751 67.7 L760.5 78.3 M760.5 67.7 L751 78.3" transform="translate(0,-44)"/>
  <path d="M762 11.5 H771.5 V13.5 L768 17 V20 L765.5 20 V17 L762 13.5 Z" style="stroke-width:1.3"/>
 </g>
 <path d="M649.6 31.2 H655.9 L652.75 34.5 Z" fill="#4a4a50"/>
</svg>
<div class="t" style="left:712px;top:60px;font-size:14.2px;color:#80808a">165 / 165</div>
<!-- left toolbar badges -->
<div class="a" style="left:98px;top:59px;width:80.5px;height:16px;background:#1976d2;border-radius:3px"></div>
<div class="t" style="left:98px;width:80.5px;top:60px;text-align:center;font-size:11.7px;font-weight:bold;color:#fff">Актуальная</div>
<div class="a" style="left:183px;top:59px;width:105.5px;height:16px;background:#1976d2;border-radius:3px"></div>
<div class="t" style="left:183px;width:105.5px;top:61px;text-align:center;font-size:12.2px;color:#fff">30.09.2025 17:17</div>
<div class="t" style="left:293px;top:61px;font-size:14.7px;color:#1e1e1e">Гостиница СМР-Ак...</div>
<!-- right toolbar -->
<div class="a" style="left:838px;top:49px;width:193px;height:36px;background:#fff;border:1px solid #c4c4c9;border-radius:4px"></div>
<div class="t" style="left:849.5px;top:60px;font-size:14.6px;color:#1e1e1e">ИИ декомпозиция...</div>
<svg style="left:1002px;top:64px" width="12" height="7"><path d="M0.5 0.5 H10.5 L5.5 6 Z" fill="#4a4a50"/></svg>
<div class="a" style="left:1252.5px;top:47px;width:291px;height:40px;border:1px solid #c4c4c9;border-radius:4px"></div>
<div class="t" style="left:1265px;top:52.5px;font-size:11.3px;color:#8a8a90">Выберите AI модель</div>
<div class="t" style="left:1265px;top:65px;font-size:14.5px;color:#1e1e1e">DeepSeek</div>
<svg style="left:1515px;top:64.5px" width="12" height="7"><path d="M0.5 0.5 H10.5 L5.5 6 Z" fill="#4a4a50"/></svg>
<div class="a" style="left:1552.5px;top:47px;width:217px;height:40px;border:1px solid #c4c4c9;border-radius:4px"></div>
<div class="t" style="left:1565px;top:52.5px;font-size:11.3px;color:#8a8a90">Создать работ:</div>
<div class="t" style="left:1565px;top:65px;font-size:14.5px;color:#1e1e1e">5</div>
<div class="a" style="left:1780px;top:51px;width:132px;height:32px;background:#1976d2;border-radius:4px;box-shadow:0 1px 3px rgba(0,0,0,.3)"></div>
<div class="t" style="left:1780px;width:132px;top:59px;text-align:center;font-size:14px;font-weight:bold;color:#fff;letter-spacing:-0.2px">Декомпозировать</div>
<!-- ISR breadcrumb -->
<div class="a" style="left:838px;top:95px;width:37px;height:16px;background:#1976d2;border-radius:3px"></div>
<div class="t" style="left:838px;width:37px;top:96.5px;text-align:center;font-size:13px;font-weight:bold;color:#fff">ИСР</div>
<div class="t" style="left:879px;top:94px;font-size:15px;color:#1e1e1e">Отель Речной / Строительство отеля / Земляные работы / Устройство котлована</div>
<!-- constraints textarea -->
<div class="a" style="left:838px;top:125px;width:1077.5px;height:39.5px;border:1px solid #c4c4c9;border-radius:4px;background:#fff"></div>
<div class="t" style="left:850px;top:130.5px;font-size:11.3px;color:#8a8a90">Ограничения</div>
<div class="t" style="left:850px;top:144px;font-size:15.2px;color:#1e1e1e">Сосредоточиться на этапах проектирования</div>
<svg style="left:1893px;top:152px" width="12" height="10"><path d="M1 9 L9 1 M5 9 L9 5" stroke="#6a6a70" stroke-width="1.2"/></svg>
<div class="t" style="left:1357px;width:40px;top:177px;text-align:center;font-size:12.5px;color:#1e1e1e">2025</div>
<div class="a" style="left:834px;top:190px;width:1084px;height:1.5px;background:#cfcfd4"></div>
<div class="a" style="left:834px;top:207px;width:1084px;height:1.5px;background:#cfcfd4"></div>
<div class="a" style="left:834px;top:224px;width:1084px;height:1.5px;background:#cfcfd4"></div>
<div class="a" style="left:1024.7px;top:191px;width:1.5px;height:34px;background:#cfcfd4"></div>
<div class="t" style="left:834px;width:191px;top:194px;text-align:center;font-size:12.5px;color:#1e1e1e">апрель</div>
<div class="t" style="left:1026px;width:892px;top:194px;text-align:center;font-size:12.5px;color:#1e1e1e">май</div>
<div class="t" style="left:834.5px;top:210.5px;font-size:12.5px;color:#1e1e1e">29</div>
<div class="a" style="left:896.8px;top:208px;width:1.5px;height:17px;background:#cfcfd4"></div>
<div class="t" style="left:897.3px;width:127.90000000000009px;top:210.5px;text-align:center;font-size:12.5px;color:#1e1e1e">ср 30</div>
<div class="a" style="left:1024.7px;top:208px;width:1.5px;height:17px;background:#cfcfd4"></div>
<div class="t" style="left:1025.2px;width:127.89999999999986px;top:210.5px;text-align:center;font-size:12.5px;color:#1e1e1e">чт 1</div>
<div class="a" style="left:1152.6px;top:208px;width:1.5px;height:17px;background:#cfcfd4"></div>
<div class="t" style="left:1153.1px;width:127.90000000000009px;top:210.5px;text-align:center;font-size:12.5px;color:#1e1e1e">пт 2</div>
<div class="a" style="left:1280.5px;top:208px;width:1.5px;height:17px;background:#cfcfd4"></div>
<div class="t" style="left:1281.0px;width:127.90000000000009px;top:210.5px;text-align:center;font-size:12.5px;color:#1e1e1e">сб 3</div>
<div class="a" style="left:1408.4px;top:208px;width:1.5px;height:17px;background:#cfcfd4"></div>
<div class="t" style="left:1408.9px;width:127.89999999999986px;top:210.5px;text-align:center;font-size:12.5px;color:#1e1e1e">вс 4</div>
<div class="a" style="left:1536.3px;top:208px;width:1.5px;height:17px;background:#cfcfd4"></div>
<div class="t" style="left:1536.8px;width:127.90000000000009px;top:210.5px;text-align:center;font-size:12.5px;color:#1e1e1e">пн 5</div>
<div class="a" style="left:1664.2px;top:208px;width:1.5px;height:17px;background:#cfcfd4"></div>
<div class="t" style="left:1664.7px;width:127.89999999999986px;top:210.5px;text-align:center;font-size:12.5px;color:#1e1e1e">вт 6</div>
<div class="a" style="left:1792.1px;top:208px;width:1.5px;height:17px;background:#cfcfd4"></div>
<div class="t" style="left:1792.6px;width:127.90000000000009px;top:210.5px;text-align:center;font-size:12.5px;color:#1e1e1e">ср 7</div>
<div class="a" style="left:835px;top:248px;width:1083px;background:repeating-linear-gradient(90deg,#d6d6da 0 2px,transparent 2px 6px);height:1.3px"></div>
<div class="a" style="left:835px;top:270px;width:1083px;background:repeating-linear-gradient(90deg,#d6d6da 0 2px,transparent 2px 6px);height:1.3px"></div>
<div class="a" style="left:835px;top:292px;width:1083px;background:repeating-linear-gradient(90deg,#d6d6da 0 2px,transparent 2px 6px);height:1.3px"></div>
<div class="a" style="left:835px;top:314px;width:1083px;background:repeating-linear-gradient(90deg,#d6d6da 0 2px,transparent 2px 6px);height:1.3px"></div>
<div class="a" style="left:835px;top:336px;width:1083px;background:repeating-linear-gradient(90deg,#d6d6da 0 2px,transparent 2px 6px);height:1.3px"></div>
<div class="t" style="left:1238px;top:231.5px;font-size:12.85px;color:#606066">Геодезическая разбивка котлована</div>
<div class="t" style="left:1387px;top:253.5px;font-size:12.85px;color:#606066">Разработка грунта механизированным способом</div>
<div class="t" style="left:1536px;top:275.5px;font-size:12.85px;color:#606066">Устройство водоотвода и водопонижения</div>
<div class="t" style="left:1557px;top:297.5px;font-size:12.85px;color:#606066">Уплотнение дна котлована</div>
<div class="t" style="left:1578px;top:319.5px;font-size:12.85px;color:#606066">Устройство подготовки под фундамент</div>
<svg style="left:0;top:0" width="1918" height="910">
<rect x="1196" y="239" width="21" height="7" fill="#21c896"/>
<rect x="1213" y="239" width="4" height="7" fill="#111"/>
<rect x="1196" y="239" width="4" height="7" fill="#111"/>
<path d="M1217.5 246 V249.5 H1203 V264.5 H1210" fill="none" stroke="#111" stroke-width="1.5"/>
<path d="M1209 260.5 L1217 264.5 L1209 268.5 Z" fill="#111"/>
<rect x="1217" y="261" width="149" height="7" fill="#21c896"/>
<rect x="1362" y="261" width="4" height="7" fill="#111"/>
<path d="M1366.5 268 V271.5 H1352 V286.5 H1359" fill="none" stroke="#111" stroke-width="1.5"/>
<path d="M1358 282.5 L1366 286.5 L1358 290.5 Z" fill="#111"/>
<rect x="1366" y="283" width="150" height="7" fill="#21c896"/>
<rect x="1512" y="283" width="4" height="7" fill="#111"/>
<path d="M1516.5 290 V293.5 H1502 V308.5 H1509" fill="none" stroke="#111" stroke-width="1.5"/>
<path d="M1508 304.5 L1516 308.5 L1508 312.5 Z" fill="#111"/>
<rect x="1516" y="305" width="21" height="7" fill="#21c896"/>
<rect x="1533" y="305" width="4" height="7" fill="#111"/>
<path d="M1537.5 312 V315.5 H1523 V330.5 H1530" fill="none" stroke="#111" stroke-width="1.5"/>
<path d="M1529 326.5 L1537 330.5 L1529 334.5 Z" fill="#111"/>
<rect x="1537" y="327" width="21" height="7" fill="#21c896"/>
<rect x="1554" y="327" width="4" height="7" fill="#111"/>
</svg>
<div class="a" style="left:834px;top:367px;width:1084px;height:1px;background:#c6c6cb"></div>
<div class="t" style="left:834px;width:73.5px;top:377px;text-align:center;font-size:12px;font-weight:bold;color:#1e1e1e">Шифр</div>
<div class="t" style="left:907.5px;width:636.5px;top:377px;text-align:center;font-size:12px;font-weight:bold;color:#1e1e1e">Наименование</div>
<div class="t" style="left:1544px;width:164px;top:377px;text-align:center;font-size:12px;font-weight:bold;color:#1e1e1e">Старт</div>
<div class="t" style="left:1708px;width:135px;top:377px;text-align:center;font-size:12px;font-weight:bold;color:#1e1e1e">Финиш</div>
<div class="t" style="left:1843px;width:75px;top:377px;text-align:center;font-size:12px;font-weight:bold;color:#1e1e1e">План ФО</div>
<div class="a" style="left:834px;top:398px;width:1084px;height:1.2px;background:#c6c6cb"></div>
<div class="a" style="left:907.5px;top:368px;width:1.3px;height:30px;background:#d2d2d6"></div>
<div class="a" style="left:1544px;top:368px;width:1.3px;height:30px;background:#d2d2d6"></div>
<div class="a" style="left:1708px;top:368px;width:1.3px;height:30px;background:#d2d2d6"></div>
<div class="a" style="left:1843px;top:368px;width:1.3px;height:30px;background:#d2d2d6"></div>
<div class="a" style="left:907.5px;top:400.5px;width:1.3px;height:27.5px;background:#d2d2d6"></div>
<div class="a" style="left:1544px;top:400.5px;width:1.3px;height:27.5px;background:#d2d2d6"></div>
<div class="a" style="left:1708px;top:400.5px;width:1.3px;height:27.5px;background:#d2d2d6"></div>
<div class="a" style="left:1843px;top:400.5px;width:1.3px;height:27.5px;background:#d2d2d6"></div>
<div class="a" style="left:834px;top:429px;width:1084px;height:1.2px;background:#c6c6cb"></div>
<div class="t" style="left:837px;top:408px;font-size:13.2px;color:#1e1e1e">01.02.1</div>
<div class="t" style="left:912.0px;top:408px;font-size:13.8px;color:#1e1e1e">Геодезическая разбивка котлована</div>
<div class="a" style="left:1546px;top:400px;width:162px;height:28px;border:1.5px solid #a9c3e6;border-radius:3px;background:#fff"></div>
<div class="t" style="left:1554px;top:408px;font-size:13.8px;color:#1e1e1e;letter-spacing:0.5px">02.05.2025 11:00:00</div>
<svg style="left:1692.5px;top:406.5px" width="12" height="12"><rect x="1.5" y="2" width="9" height="9" rx="1.2" fill="none" stroke="#333" stroke-width="1.3"/><path d="M1.5 4.5 H10.5" stroke="#333" stroke-width="1.6"/><path d="M4 0.5 V2.5 M8 0.5 V2.5" stroke="#333" stroke-width="1.2"/></svg>
<div class="t" style="left:1712px;top:408px;font-size:13.8px;color:#1e1e1e">02.05.2025 15:00</div>
<div class="t" style="left:1847px;top:408px;font-size:13.8px;color:#1e1e1e">300</div>
<div class="a" style="left:834px;top:430px;width:1084px;height:30px;background:#fafafa"></div>
<div class="a" style="left:907.5px;top:431.5px;width:1.3px;height:27.5px;background:#d2d2d6"></div>
<div class="a" style="left:1544px;top:431.5px;width:1.3px;height:27.5px;background:#d2d2d6"></div>
<div class="a" style="left:1708px;top:431.5px;width:1.3px;height:27.5px;background:#d2d2d6"></div>
<div class="a" style="left:1843px;top:431.5px;width:1.3px;height:27.5px;background:#d2d2d6"></div>
<div class="a" style="left:834px;top:460px;width:1084px;height:1.2px;background:#c6c6cb"></div>
<div class="t" style="left:837px;top:439px;font-size:13.2px;color:#1e1e1e">01.02.2</div>
<div class="t" style="left:912.0px;top:439px;font-size:13.8px;color:#1e1e1e">Разработка грунта механизированным способом</div>
<div class="t" style="left:1548px;top:439px;font-size:13.8px;color:#1e1e1e">02.05.2025 15:00</div>
<div class="t" style="left:1712px;top:439px;font-size:13.8px;color:#1e1e1e">03.05.2025 19:00</div>
<div class="t" style="left:1847px;top:439px;font-size:13.8px;color:#1e1e1e">300</div>
<div class="a" style="left:907.5px;top:462.5px;width:1.3px;height:27.5px;background:#d2d2d6"></div>
<div class="a" style="left:1544px;top:462.5px;width:1.3px;height:27.5px;background:#d2d2d6"></div>
<div class="a" style="left:1708px;top:462.5px;width:1.3px;height:27.5px;background:#d2d2d6"></div>
<div class="a" style="left:1843px;top:462.5px;width:1.3px;height:27.5px;background:#d2d2d6"></div>
<div class="a" style="left:834px;top:491px;width:1084px;height:1.2px;background:#c6c6cb"></div>
<div class="t" style="left:837px;top:470px;font-size:13.2px;color:#1e1e1e">01.02.3</div>
<div class="t" style="left:912.0px;top:470px;font-size:13.8px;color:#1e1e1e">Устройство водоотвода и водопонижения</div>
<div class="t" style="left:1548px;top:470px;font-size:13.8px;color:#1e1e1e">03.05.2025 19:00</div>
<div class="t" style="left:1712px;top:470px;font-size:13.8px;color:#1e1e1e">04.05.2025 23:00</div>
<div class="t" style="left:1847px;top:470px;font-size:13.8px;color:#1e1e1e">300</div>
<div class="a" style="left:834px;top:492px;width:1084px;height:30px;background:#fafafa"></div>
<div class="a" style="left:907.5px;top:493.5px;width:1.3px;height:27.5px;background:#d2d2d6"></div>
<div class="a" style="left:1544px;top:493.5px;width:1.3px;height:27.5px;background:#d2d2d6"></div>
<div class="a" style="left:1708px;top:493.5px;width:1.3px;height:27.5px;background:#d2d2d6"></div>
<div class="a" style="left:1843px;top:493.5px;width:1.3px;height:27.5px;background:#d2d2d6"></div>
<div class="a" style="left:834px;top:522px;width:1084px;height:1.2px;background:#c6c6cb"></div>
<div class="t" style="left:837px;top:501px;font-size:13.2px;color:#1e1e1e">01.02.4</div>
<div class="t" style="left:912.0px;top:501px;font-size:13.8px;color:#1e1e1e">Уплотнение дна котлована</div>
<div class="t" style="left:1548px;top:501px;font-size:13.8px;color:#1e1e1e">04.05.2025 23:00</div>
<div class="t" style="left:1712px;top:501px;font-size:13.8px;color:#1e1e1e">05.05.2025 03:00</div>
<div class="t" style="left:1847px;top:501px;font-size:13.8px;color:#1e1e1e">300</div>
<div class="a" style="left:907.5px;top:524.5px;width:1.3px;height:27.5px;background:#d2d2d6"></div>
<div class="a" style="left:1544px;top:524.5px;width:1.3px;height:27.5px;background:#d2d2d6"></div>
<div class="a" style="left:1708px;top:524.5px;width:1.3px;height:27.5px;background:#d2d2d6"></div>
<div class="a" style="left:1843px;top:524.5px;width:1.3px;height:27.5px;background:#d2d2d6"></div>
<div class="a" style="left:834px;top:553px;width:1084px;height:1.2px;background:#c6c6cb"></div>
<div class="t" style="left:837px;top:532px;font-size:13.2px;color:#1e1e1e">01.02.5</div>
<div class="t" style="left:912.0px;top:532px;font-size:13.8px;color:#1e1e1e">Устройство подготовки под фундамент</div>
<div class="t" style="left:1548px;top:532px;font-size:13.8px;color:#1e1e1e">05.05.2025 03:00</div>
<div class="t" style="left:1712px;top:532px;font-size:13.8px;color:#1e1e1e">05.05.2025 07:00</div>
<div class="t" style="left:1847px;top:532px;font-size:13.8px;color:#1e1e1e">300</div>
<div class="a" style="left:1663px;top:576px;width:241px;height:32px;background:#1976d2;border-radius:4px;box-shadow:0 1px 3px rgba(0,0,0,.3)"></div>
<div class="t" style="left:1663px;width:241px;top:585px;text-align:center;font-size:14.6px;color:#fff">Согласовать и внести в график</div>
<div class="t" style="left:-138px;width:600px;text-align:center;top:643.5px;font-size:17.3px;color:#1976d2">Карточка работы</div>
<div class="t" style="left:81px;width:600px;text-align:center;top:643.5px;font-size:17.3px;color:#2a2a2e">Связи работы</div>
<div class="t" style="left:311.5px;width:600px;text-align:center;top:643.5px;font-size:17.3px;color:#2a2a2e">Связанные графики</div>
<div class="t" style="left:540px;width:600px;text-align:center;top:643.5px;font-size:17.3px;color:#2a2a2e">Справочники</div>
<div class="t" style="left:786.5999999999999px;width:600px;text-align:center;top:643.5px;font-size:17.3px;color:#2a2a2e">Суточное планирование</div>
<div class="t" style="left:1066px;width:600px;text-align:center;top:643.5px;font-size:17.3px;color:#2a2a2e">Фото / Документация</div>
<div class="t" style="left:1334.8px;width:600px;text-align:center;top:643.5px;font-size:17.3px;color:#2a2a2e">Запросы и поручения</div>
<div class="t" style="left:1544.5px;width:600px;text-align:center;top:643.5px;font-size:17.3px;color:#2a2a2e">Табели</div>
<div class="a" style="left:46px;top:672px;width:232px;height:2px;background:#1976d2"></div>
<div class="t" style="left:62.5px;top:694.57px;font-size:13.5px;font-weight:bold;color:#1e1e1e;">Тип</div>
<div class="t" style="left:62.5px;top:724.34px;font-size:13.3px;font-weight:bold;color:#1e1e1e;">Шифр</div>
<div class="t" style="left:62.5px;top:754.19px;font-size:13.6px;font-weight:bold;color:#1e1e1e;">Статус</div>
<div class="a" style="left:122.5px;top:690px;width:161.0px;height:21.5px;background:#fff;border:1px solid #c4c4c9;border-radius:3px;"></div>
<div class="t" style="left:133.6px;top:692.13px;font-size:15.2px;color:#1e1e1e;">Работа</div>
<svg style="left:255px;top:698px" width="11" height="6.5"><path d="M0.5 0.5 H10.5 L5.5 5.5 Z" fill="#4a4a50"/></svg>
<div class="a" style="left:122.5px;top:720.5px;width:161.0px;height:21.0px;background:#fff;border:1px solid #c4c4c9;border-radius:3px;"></div>
<div class="t" style="left:133.6px;top:722.73px;font-size:15.2px;color:#1e1e1e;">01.02</div>
<div class="a" style="left:122.5px;top:750.5px;width:161.0px;height:21.0px;background:#fff;border:1px solid #c4c4c9;border-radius:3px;"></div>
<div class="t" style="left:133.6px;top:751.93px;font-size:15.2px;color:#1e1e1e;">Завершена</div>
<svg style="left:255px;top:758.5px" width="11" height="6.5"><path d="M0.5 0.5 H10.5 L5.5 5.5 Z" fill="#4a4a50"/></svg>
<div class="a" style="left:292px;top:690px;width:528px;height:49.5px;background:#fff;border:1px solid #c4c4c9;border-radius:3px;"></div>
<div class="t" style="left:304.3px;top:704.08px;font-size:18.1px;font-weight:bold;color:#1e1e1e;">Устройство котлована</div>
<div class="t" style="left:292.7px;top:752.06px;font-size:14.7px;color:#1e1e1e;">Сценарий</div>
<div class="a" style="left:365.5px;top:748px;width:455px;height:22px;background:#f0f0f3;border-radius:4px"></div>
<div class="t" style="left:226px;width:600px;text-align:center;top:751.79px;font-size:13.6px;color:#1e1e1e;">Сценария нет</div>
<svg style="left:799.4px;top:751px" width="16" height="16"><path d="M13.60 8.00 L13.70 8.50 L13.96 9.05 L14.28 9.68 L14.53 10.38 L14.60 11.08 L14.41 11.70 L13.96 12.18 L13.32 12.47 L12.60 12.60 L11.89 12.63 L11.28 12.69 L10.80 12.85 L10.42 13.18 L10.07 13.69 L9.68 14.28 L9.21 14.84 L8.63 15.25 L8.00 15.40 L7.37 15.25 L6.79 14.84 L6.32 14.28 L5.93 13.69 L5.58 13.18 L5.20 12.85 L4.72 12.69 L4.11 12.63 L3.40 12.60 L2.68 12.47 L2.04 12.18 L1.59 11.70 L1.40 11.08 L1.47 10.38 L1.72 9.68 L2.04 9.05 L2.30 8.50 L2.40 8.00 L2.30 7.50 L2.04 6.95 L1.72 6.32 L1.47 5.62 L1.40 4.92 L1.59 4.30 L2.04 3.82 L2.68 3.53 L3.40 3.40 L4.11 3.37 L4.72 3.31 L5.20 3.15 L5.58 2.82 L5.93 2.31 L6.32 1.72 L6.79 1.16 L7.37 0.75 L8.00 0.60 L8.63 0.75 L9.21 1.16 L9.68 1.72 L10.07 2.31 L10.42 2.82 L10.80 3.15 L11.28 3.31 L11.89 3.37 L12.60 3.40 L13.32 3.53 L13.96 3.82 L14.41 4.30 L14.60 4.92 L14.53 5.62 L14.28 6.32 L13.96 6.95 L13.70 7.50 L13.60 8.00 Z" fill="none" stroke="#bbbbc0" stroke-width="1.3"/><path d="M5.2 5.3 L7.6 8 L5.2 10.7 M8.4 5.3 L10.8 8 L8.4 10.7" fill="none" stroke="#bbbbc0" stroke-width="1.2"/></svg>
<div class="a" style="left:829px;top:690px;width:145.5px;height:82px;border:1.5px solid #5b9bdc;border-radius:7px;background:#fff;overflow:hidden"><div class="a" style="left:0;top:0;width:145px;height:32px;background:#5d9cdc"></div></div>
<div class="a" style="left:860px;top:682px;width:10px;height:15px;background:#fff;border:1.5px solid #5b9bdc;border-radius:3.5px"></div>
<div class="a" style="left:932.5px;top:682px;width:10px;height:15px;background:#fff;border:1.5px solid #5b9bdc;border-radius:3.5px"></div>
<div class="t" style="left:601.7px;width:600px;text-align:center;top:700.36px;font-size:13.4px;color:#fff;text-decoration:underline;text-underline-offset:1.5px">PLAN-R: 7 дней</div>
<div class="a" style="left:866px;top:728.3px;width:71.5px;height:21.200000000000045px;background:#fff;border:1px solid #c4c4c9;border-radius:4px;"></div>
<div class="t" style="left:602px;width:600px;text-align:center;top:731.60px;font-size:15px;color:#1e1e1e;">8</div>
<div class="t" style="left:945px;top:733.34px;font-size:12px;color:#1e1e1e;">ч.</div>
<svg style="left:836px;top:726px" width="26" height="26"><g fill="none" stroke="#3a3a40" stroke-width="1.45" stroke-linejoin="round" stroke-linecap="round"><path d="M6 8.2 L8.3 5.2 L10.2 8.4 Z"/><path d="M9.4 8.6 L16.6 16.2"/><path d="M13.4 15.2 L12.6 16 A1.8 1.8 0 0 0 12.6 18.5 L15.8 21.3 A2.5 2.5 0 0 0 19.4 21.3 L20.9 19.8 A2.5 2.5 0 0 0 20.9 16.2 L17.8 13 A1.8 1.8 0 0 0 15.3 13 L14.7 13.7"/></g></svg>
<div class="t" style="left:601px;width:600px;text-align:center;top:753.78px;font-size:12.9px;color:#1e1e1e;">Календарных: 2 дн.</div>
<div class="a" style="left:54px;top:780px;width:920px;height:23.5px;background:#1976d2"></div>
<div class="t" style="left:75.7px;top:785.25px;font-size:14px;color:#fff;letter-spacing:0.72px">02.05.2025 17:17</div>
<div class="t" style="left:218px;width:600px;text-align:center;top:785.25px;font-size:14px;color:#fff;letter-spacing:0.5px">100 %</div>
<div class="t" style="left:343px;width:600px;text-align:right;top:785.25px;font-size:14px;color:#fff;letter-spacing:0.72px">03.05.2025 17:17</div>
<div class="t" style="left:54px;top:822.11px;font-size:14.05px;font-weight:bold;color:#1e1e1e;">Ограничения</div>
<div class="a" style="left:207px;top:827px;width:767px;height:2.5px;background:#b4b4bb"></div>
<div class="t" style="left:54px;top:849.65px;font-size:14.35px;color:#1e1e1e;">Начало</div>
<div class="a" style="left:121.5px;top:845.4px;width:148.0px;height:20.899999999999977px;background:#fff;border:1px solid #c4c4c9;border-radius:3px;"></div>
<svg style="left:240px;top:853px" width="11" height="6.5"><path d="M0.5 0.5 H10.5 L5.5 5.5 Z" fill="#4a4a50"/></svg>
<div class="t" style="left:728.7px;top:849.27px;font-size:14.8px;color:#1e1e1e;">Окончание</div>
<div class="a" style="left:821px;top:845.3px;width:149px;height:20.800000000000068px;background:#fff;border:1px solid #c4c4c9;border-radius:3px;"></div>
<svg style="left:940px;top:853px" width="11" height="6.5"><path d="M0.5 0.5 H10.5 L5.5 5.5 Z" fill="#4a4a50"/></svg>
<div class="a" style="left:54px;top:883.3px;width:39.5px;height:19.5px;background:#a3a3a6;border-radius:3px;box-shadow:0 1px 2px rgba(0,0,0,.35)"></div>
<svg style="left:64px;top:886px" width="20" height="14"><path d="M9 1.5 L3.5 7 L9 12.5 M15 1.5 L9.5 7 L15 12.5" fill="none" stroke="#fff" stroke-width="1.3"/></svg>
<div class="t" style="left:110px;top:887.19px;font-size:14.9px;color:#1e1e1e;">Начало как можно раньше</div>
<div class="a" style="left:934.5px;top:883.3px;width:39.5px;height:19.5px;background:#a3a3a6;border-radius:3px;box-shadow:0 1px 2px rgba(0,0,0,.35)"></div>
<svg style="left:944px;top:886px" width="20" height="14"><path d="M5 1.5 L10.5 7 L5 12.5 M11 1.5 L16.5 7 L11 12.5" fill="none" stroke="#fff" stroke-width="1.3"/></svg>
<div class="t" style="left:317px;width:600px;text-align:right;top:887.02px;font-size:15.1px;color:#1e1e1e;">Окончание как можно позже</div>
<div class="a" style="left:982px;top:682px;width:1.5px;height:228px;background:#c8c8cd"></div>
<div class="t" style="left:991px;top:703.46px;font-size:13.4px;font-weight:bold;color:#1e1e1e;">Атрибуты</div>
<div class="a" style="left:1081.5px;top:690.3px;width:829.5px;height:39.30000000000007px;background:#fff;border:1px solid #c4c4c9;border-radius:4px;"></div>
<div class="t" style="left:1093.9px;top:701.05px;font-size:15.3px;color:#8c8c92;">Поиск</div>
<div class="t" style="left:991.5px;top:753.44px;font-size:14.6px;color:#1e1e1e;">Шифр</div>
<div class="t" style="left:1456px;top:753.44px;font-size:14.6px;color:#1e1e1e;">01.02</div>
<div class="a" style="left:987px;top:780px;width:931px;height:1.2px;background:#c4c4c9"></div>
<div class="t" style="left:991.5px;top:795.44px;font-size:14.6px;color:#1e1e1e;">Наименование</div>
<div class="t" style="left:1456px;top:795.44px;font-size:14.6px;color:#1e1e1e;">Устройство котлована</div>
<div class="a" style="left:987px;top:822px;width:931px;height:1.2px;background:#c4c4c9"></div>
<div class="t" style="left:991.5px;top:837.44px;font-size:14.6px;color:#1e1e1e;">Старт</div>
<div class="t" style="left:1456px;top:837.44px;font-size:14.6px;color:#1e1e1e;">02.05.2025 17:17</div>
<div class="a" style="left:987px;top:864px;width:931px;height:1.2px;background:#c4c4c9"></div>
<div class="t" style="left:991.5px;top:879.44px;font-size:14.6px;color:#1e1e1e;">Финиш</div>
<div class="t" style="left:1456px;top:879.44px;font-size:14.6px;color:#1e1e1e;">03.05.2025 17:17</div>
<div class="a" style="left:987px;top:906px;width:931px;height:1.2px;background:#c4c4c9"></div>
<svg style="left:0;top:0" width="1918" height="910">
<path d="M444.7 239.3 H388" stroke="#000" stroke-width="3"/>
<path d="M377 239.3 L388.5 233.3 V245.3 Z" fill="#000"/>
<ellipse cx="460.3" cy="239.3" rx="15.6" ry="17.4" fill="#fff" stroke="#000" stroke-width="3.2"/>
<path d="M765.6 66 H823" stroke="#000" stroke-width="3"/>
<path d="M834 66 L822.5 60 V72 Z" fill="#000"/>
<ellipse cx="750" cy="66" rx="15.6" ry="17.4" fill="#fff" stroke="#000" stroke-width="3.2"/>
<path d="M1187.6 65.7 H1245" stroke="#000" stroke-width="3"/>
<path d="M1256 65.7 L1244.5 59.7 V71.7 Z" fill="#000"/>
<ellipse cx="1172" cy="65.7" rx="15.6" ry="17.4" fill="#fff" stroke="#000" stroke-width="3.2"/>
<path d="M1718.9 66 H1662" stroke="#000" stroke-width="3"/>
<path d="M1651 66 L1662.5 60 V72 Z" fill="#000"/>
<ellipse cx="1734.5" cy="66" rx="15.6" ry="17.4" fill="#fff" stroke="#000" stroke-width="3.2"/>
<path d="M1263.9 142.8 H1207" stroke="#000" stroke-width="3"/>
<path d="M1196 142.8 L1207.5 136.8 V148.8 Z" fill="#000"/>
<ellipse cx="1279.5" cy="142.8" rx="15.6" ry="17.4" fill="#fff" stroke="#000" stroke-width="3.2"/>
<path d="M1855.9 157.6 V104.8" stroke="#000" stroke-width="3"/>
<path d="M1855.9 93.8 L1849.9 105.3 H1861.9 Z" fill="#000"/>
<ellipse cx="1857.4" cy="175" rx="15.6" ry="17.4" fill="#fff" stroke="#000" stroke-width="3.2"/>
<path d="M1103.3999999999999 258.4 H1160.6" stroke="#000" stroke-width="3"/>
<path d="M1171.6 258.4 L1160.1 252.39999999999998 V264.4 Z" fill="#000"/>
<ellipse cx="1087.8" cy="258.4" rx="15.6" ry="17.4" fill="#fff" stroke="#000" stroke-width="3.2"/>
<path d="M910.5 284.79999999999995 V348.4" stroke="#000" stroke-width="3"/>
<path d="M910.5 359.4 L904.5 347.9 H916.5 Z" fill="#000"/>
<ellipse cx="911" cy="267.4" rx="15.6" ry="17.4" fill="#fff" stroke="#000" stroke-width="3.2"/>
<path d="M1476.5 414.8 H1534" stroke="#000" stroke-width="3"/>
<path d="M1545 414.8 L1533.5 408.8 V420.8 Z" fill="#000"/>
<ellipse cx="1460.9" cy="414.8" rx="15.6" ry="17.4" fill="#fff" stroke="#000" stroke-width="3.2"/>
<path d="M1590.1 593.8 H1647" stroke="#000" stroke-width="3"/>
<path d="M1658 593.8 L1646.5 587.8 V599.8 Z" fill="#000"/>
<ellipse cx="1574.5" cy="593.8" rx="15.6" ry="17.4" fill="#fff" stroke="#000" stroke-width="3.2"/>
</svg>
<div class="t" style="left:430.3px;width:60px;text-align:center;top:228.58px;font-size:22px;color:#000;">1</div>
<div class="t" style="left:720px;width:60px;text-align:center;top:55.28px;font-size:22px;color:#000;">2</div>
<div class="t" style="left:1142px;width:60px;text-align:center;top:54.98px;font-size:22px;color:#000;">3</div>
<div class="t" style="left:1704.5px;width:60px;text-align:center;top:55.28px;font-size:22px;color:#000;">4</div>
<div class="t" style="left:1249.5px;width:60px;text-align:center;top:132.08px;font-size:22px;color:#000;">5</div>
<div class="t" style="left:1827.4px;width:60px;text-align:center;top:164.28px;font-size:22px;color:#000;">6</div>
<div class="t" style="left:1057.8px;width:60px;text-align:center;top:247.68px;font-size:22px;color:#000;">7</div>
<div class="t" style="left:881px;width:60px;text-align:center;top:256.68px;font-size:22px;color:#000;">8</div>
<div class="t" style="left:1430.9px;width:60px;text-align:center;top:404.08px;font-size:22px;color:#000;">9</div>
<div class="t" style="left:1544.5px;width:60px;text-align:center;top:583.08px;font-size:22px;color:#000;letter-spacing:-1.5px;">10</div>

</body></html>
